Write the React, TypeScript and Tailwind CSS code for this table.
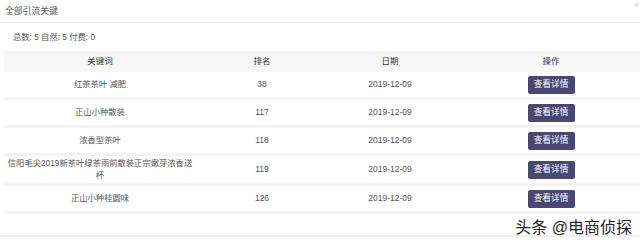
const rows = [
  { keyword: "红茶茶叶 减肥", rank: 38, date: "2019-12-09" },
  { keyword: "正山小种散装", rank: 117, date: "2019-12-09" },
  { keyword: "浓香型茶叶", rank: 118, date: "2019-12-09" },
  { keyword: "信阳毛尖2019新茶叶绿茶雨前散装正宗嫩芽浓香送杯", rank: 119, date: "2019-12-09" },
  { keyword: "正山小种桂圆味", rank: 126, date: "2019-12-09" },
];

export default function App() {
  return (
    <div className="relative w-[640px] h-[243px] overflow-hidden bg-white text-[#555] font-['Liberation_Sans','Noto_Sans_CJK_SC',sans-serif]">
      {/* title bar */}
      <div className="relative h-[23px] flex items-center px-[5px] border-b border-[#ececec]">
        <span className="text-[8.8px] text-[#555] leading-none">全部引流关键</span>
        <span className="absolute right-[1px] top-[1px] text-[9px] text-[#ccc] leading-none">×</span>
      </div>

      {/* summary */}
      <div className="h-[28px] flex items-center pl-[13px] text-[8.3px] text-[#555]">
        总数: 5 自然: 5 付费: 0
      </div>

      {/* table */}
      <div className="ml-[4px]">
        <div className="grid grid-cols-[192px_132px_124px_1fr] h-[21px] items-center bg-[#f6f6f6] text-[8.5px] text-[#333]">
          <div className="text-center">关键词</div>
          <div className="text-center">排名</div>
          <div className="text-center">日期</div>
          <div className="w-[198px] text-center">操作</div>
        </div>

        {rows.map((row) => (
          <div
            key={row.rank}
            className="grid grid-cols-[192px_132px_124px_1fr] items-center min-h-[28px] py-[2px] border-b-[3px] border-[#f3f3f3] text-[8.5px] text-[#555]"
          >
            <div className="px-[2px] text-center text-[8.3px] leading-[11.5px]">{row.keyword}</div>
            <div className="text-center">{row.rank}</div>
            <div className="text-center">{row.date}</div>
            <div className="w-[198px] flex justify-center">
              <button className="w-[47px] h-[18px] rounded-[2px] bg-[#4a4873] text-white text-[8.7px] leading-none">
                查看详情
              </button>
            </div>
          </div>
        ))}
      </div>

      <div className="mt-[21px] h-[2px] bg-[#f0f0f0]" />

      {/* watermark */}
      <div className="absolute right-[8px] bottom-[7px] text-[16px] leading-none text-[#222] [text-shadow:0_0_2px_#fff,0_0_1px_#fff]">
        头条 @电商侦探
      </div>
    </div>
  );
}
